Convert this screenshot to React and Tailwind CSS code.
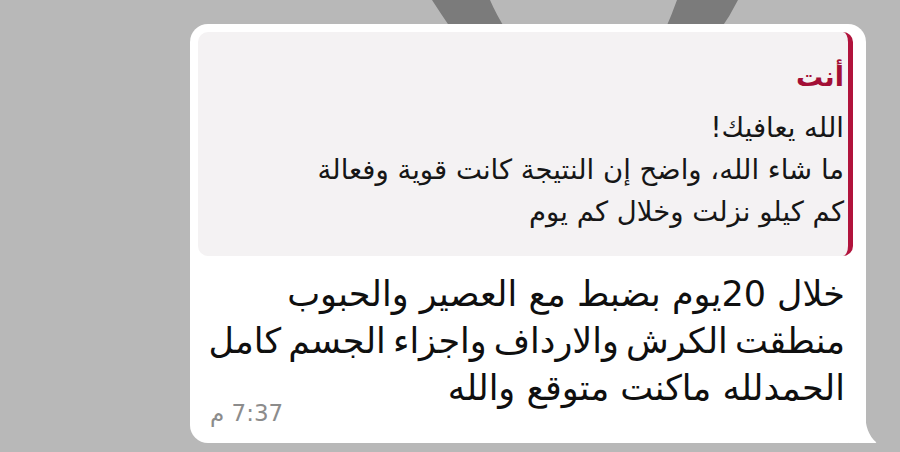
import React from "react";

export default function App() {
  const font = { fontFamily: '"DejaVu Sans", "Noto Sans", sans-serif' };
  return (
    <div className="relative w-[900px] h-[452px] overflow-hidden bg-[#b8b8b8]" style={font}>
      <svg className="absolute left-0 top-0" width="900" height="60" viewBox="0 0 900 60">
        <path d="M432 0 L490 0 Q496 14 506 30 L452 30 Q441 14 432 0 Z" fill="#7b7b7b" />
        <path d="M677 0 L738 0 Q730 16 720 30 L665 30 Q672 14 677 0 Z" fill="#7b7b7b" />
      </svg>
      <div className="relative pl-[190px] pt-[24px]">
        <div className="relative w-[676px] h-[419px] rounded-[18px] bg-white pl-[8px] pr-[13px] pt-[8px]">
          <svg className="absolute right-[-13px] bottom-0" width="30" height="32" viewBox="0 0 30 32">
            <path d="M0 0 L16 0 Q16 22 27 31 Q28 32 26 32 L0 32 Z" fill="#ffffff" />
          </svg>
          <div dir="rtl" className="h-[224px] rounded-[10px] border-solid border-r-[5px] border-[#b1133c] bg-[#f4f2f3] pr-[4px] pt-[28px] text-right">
            <div className="text-[27px] leading-[34px] font-bold text-[#a30f36]">أنت</div>
            <div className="mt-[12px] whitespace-nowrap text-[27.5px] leading-[42px] text-[#161616]">
              <div>الله يعافيك!</div>
              <div>ما شاء الله، واضح إن النتيجة كانت قوية وفعالة</div>
              <div>كم كيلو نزلت وخلال كم يوم</div>
            </div>
          </div>
          <div dir="rtl" className="whitespace-nowrap pr-[8px] pt-[15px] text-right text-[35px] leading-[47px] text-[#0f0f0f]">
            <div>خلال 20يوم بضبط مع العصير والحبوب</div>
            <div className="[word-spacing:-4px]">منطقت الكرش والارداف واجزاء الجسم كامل</div>
            <div>الحمدلله ماكنت متوقع والله</div>
          </div>
          <div dir="rtl" className="absolute left-[20px] bottom-[16px] text-[23px] leading-[28px] text-[#8c8c8c]">7:37 م</div>
        </div>
      </div>
    </div>
  );
}
